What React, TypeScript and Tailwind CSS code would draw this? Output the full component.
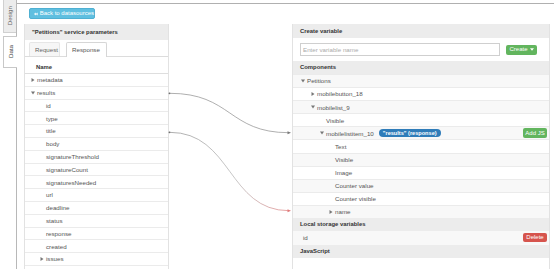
import React from 'react';

type Row = { label: string; depth: number; caret?: 'right' | 'down' };

const leftRows: Row[] = [
  { label: 'metadata', depth: 0, caret: 'right' },
  { label: 'results', depth: 0, caret: 'down' },
  { label: 'id', depth: 1 },
  { label: 'type', depth: 1 },
  { label: 'title', depth: 1 },
  { label: 'body', depth: 1 },
  { label: 'signatureThreshold', depth: 1 },
  { label: 'signatureCount', depth: 1 },
  { label: 'signaturesNeeded', depth: 1 },
  { label: 'url', depth: 1 },
  { label: 'deadline', depth: 1 },
  { label: 'status', depth: 1 },
  { label: 'response', depth: 1 },
  { label: 'created', depth: 1 },
  { label: 'issues', depth: 1, caret: 'right' },
];

const rightRows: Row[] = [
  { label: 'Petitions', depth: 0, caret: 'down' },
  { label: 'mobilebutton_18', depth: 1, caret: 'right' },
  { label: 'mobilelist_9', depth: 1, caret: 'down' },
  { label: 'Visible', depth: 2 },
  { label: 'mobilelistitem_10', depth: 2, caret: 'down' },
  { label: 'Text', depth: 3 },
  { label: 'Visible', depth: 3 },
  { label: 'Image', depth: 3 },
  { label: 'Counter value', depth: 3 },
  { label: 'Counter visible', depth: 3 },
  { label: 'name', depth: 3, caret: 'right' },
];

const leftIndent: Record<number, string> = { 0: 'pl-[6px]', 1: 'pl-[15px]' };
const rightIndent: Record<number, string> = { 0: 'pl-[8px]', 1: 'pl-[18px]', 2: 'pl-[27px]', 3: 'pl-[36px]' };

/** 小三角 */
const Caret = ({ dir }: { dir?: 'right' | 'down' }) => (
  <span className="w-[6px] flex items-center shrink-0">
    {dir === 'right' && (
      <svg width="4" height="4" viewBox="0 0 4 4">
        <path d="M0.5 0 L3.5 2 L0.5 4 Z" fill="#777" />
      </svg>
    )}
    {dir === 'down' && (
      <svg width="4" height="4" viewBox="0 0 4 4">
        <path d="M0 0.6 L4 0.6 L2 3.4 Z" fill="#777" />
      </svg>
    )}
  </span>
);

export default function App() {
  return (
    <div className="relative w-[554px] h-[269px] overflow-hidden bg-white flex font-['Liberation_Sans',Arial,sans-serif] text-[6.2px] text-[#555]">
      {/* 左侧竖向标签 */}
      <div className="w-[17px] shrink-0 border-r border-[#b8b8b8] flex flex-col items-end">
        <div className="w-[13px] h-[33px] bg-[#ececec] border border-t-0 border-r-0 border-[#d0d0d0] flex items-center justify-center">
          <span className="[writing-mode:vertical-rl] rotate-180 text-[#666]">Design</span>
        </div>
        <div className="mt-[3px] w-[14px] -mr-px h-[32px] bg-white border border-r-0 border-[#c8c8c8] flex items-center justify-center">
          <span className="[writing-mode:vertical-rl] rotate-180 text-[#444]">Data</span>
        </div>
      </div>

      {/* 主区域 */}
      <div className="flex-1 mt-[3px] border-t border-[#b0b0b0] flex flex-col">
        <div className="pl-[12px] pt-[4px] h-[20px] shrink-0">
          <button className="h-[11px] w-[66px] rounded-[2px] bg-[#5fbfe0] border border-[#4fb0d2] text-white text-[6px] whitespace-nowrap flex items-center gap-[2px] pl-[4px]">
            <svg width="5" height="4" viewBox="0 0 5 4">
              <path d="M0 2 L2.5 0 L2.5 4 Z M2.5 2 L5 0 L5 4 Z" fill="#fff" />
            </svg>
            Back to datasources
          </button>
        </div>

        <div className="flex pl-[7px] shrink-0">
          {/* 左面板 */}
          <div className="w-[145px] shrink-0 border-x border-[#e2e2e2]">
            <div className="h-[16px] bg-[#ececec] flex items-center pl-[7px] font-bold text-[#333] text-[5.9px]">
              "Petitions" service parameters
            </div>
            <div className="h-[17px] flex items-end pl-[4px] gap-[6px] border-b border-[#dcdcdc]">
              <div className="h-[14px] w-[31px] bg-[#f6f6f6] border border-b-0 border-[#e6e6e6] rounded-t-[2px] flex items-center pl-[5px] text-[#666]">
                Request
              </div>
              <div className="h-[15px] -mb-px w-[41px] bg-white border border-b-0 border-[#d6d6d6] rounded-t-[2px] flex items-center pl-[5px] text-[#555]">
                Response
              </div>
            </div>
            <div className="h-[17px] flex items-center pl-[11px] pt-[5px] font-bold text-[#333] text-[5.9px] border-b border-[#dedede]">
              Name
            </div>
            {leftRows.map((r) => (
              <div
                key={r.label}
                className={`h-[12.8px] flex items-center border-b border-[#ebebeb] ${leftIndent[r.depth]}`}
              >
                <Caret dir={r.caret} />
                <span>{r.label}</span>
              </div>
            ))}
          </div>

          <div className="w-[123px] shrink-0" />

          {/* 右面板 */}
          <div className="w-[258px] shrink-0 border-x border-[#e2e2e2] h-[260px]">
            <div className="h-[14px] bg-[#ececec] flex items-center pl-[7px] font-bold text-[#333] text-[5.9px]">
              Create variable
            </div>
            <div className="h-[23px] flex items-center pl-[7px] gap-[6px]">
              <div className="w-[200px] h-[13px] border border-[#cfcfcf] flex items-center pl-[2px] text-[#aaa] bg-white">
                Enter variable name
              </div>
              <button className="h-[10px] w-[31px] rounded-[2px] bg-[#62b55e] text-white text-[6px] flex items-center justify-center gap-[2px]">
                Create
                <svg width="4" height="3" viewBox="0 0 4 3">
                  <path d="M0 0.3 L4 0.3 L2 2.7 Z" fill="#fff" />
                </svg>
              </button>
            </div>
            <div className="h-[13px] bg-[#ececec] flex items-center pl-[7px] font-bold text-[#333] text-[5.9px]">
              Components
            </div>
            {rightRows.map((r, i) => (
              <div
                key={r.label + i}
                className={`h-[13.1px] flex items-center border-t border-[#ebebeb] pr-[2px] ${rightIndent[r.depth]} ${
                  i % 2 === 0 ? 'bg-[#f8f8f8]' : 'bg-white'
                }`}
              >
                <Caret dir={r.caret} />
                <span>{r.label}</span>
                {r.label === 'mobilelistitem_10' && (
                  <>
                    <span className="ml-[5px] h-[8px] px-[4px] rounded-full bg-[#2f7cb9] text-white font-bold text-[5.6px] flex items-center">
                      "results" (response)
                    </span>
                    <span className="ml-auto h-[10px] w-[24px] rounded-[2px] bg-[#62b55e] text-white text-[6px] flex items-center justify-center">
                      Add JS
                    </span>
                  </>
                )}
              </div>
            ))}
            <div className="h-[13.3px] bg-[#ececec] flex items-center pl-[7px] font-bold text-[#333] text-[5.9px]">
              Local storage variables
            </div>
            <div className="h-[13.3px] bg-[#f8f8f8] flex items-center pl-[10px] pr-[2px]">
              <span>id</span>
              <span className="ml-auto h-[9px] w-[24px] rounded-[2px] bg-[#d6544d] text-white text-[6px] flex items-center justify-center">
                Delete
              </span>
            </div>
            <div className="h-[13.3px] bg-[#ececec] flex items-center pl-[7px] font-bold text-[#333] text-[5.9px]">
              JavaScript
            </div>
          </div>
        </div>
      </div>

      {/* 连线 */}
      <svg className="absolute inset-0 pointer-events-none" width="554" height="269" viewBox="0 0 554 269">
        <defs>
          <linearGradient id="redfade" x1="0" y1="0" x2="1" y2="0">
            <stop offset="0" stopColor="#8a8a8a" />
            <stop offset="0.55" stopColor="#b0b0b0" />
            <stop offset="1" stopColor="#e07a7a" />
          </linearGradient>
        </defs>
        <circle cx="169.5" cy="93.3" r="0.9" fill="#666" />
        <path d="M169.5 93.3 C 232 93.3, 228 132.7, 289 132.7" fill="none" stroke="#8c8c8c" strokeWidth="0.7" />
        <path d="M287.5 131.2 L291 132.7 L287.5 134.2 Z" fill="#777" />
        <circle cx="169.5" cy="132.3" r="0.9" fill="#666" />
        <path d="M169.5 132.3 C 232 132.3, 228 210.7, 289 210.7" fill="none" stroke="url(#redfade)" strokeWidth="0.7" />
        <path d="M287.5 209.2 L291 210.7 L287.5 212.2 Z" fill="#e07a7a" />
      </svg>
    </div>
  );
}
